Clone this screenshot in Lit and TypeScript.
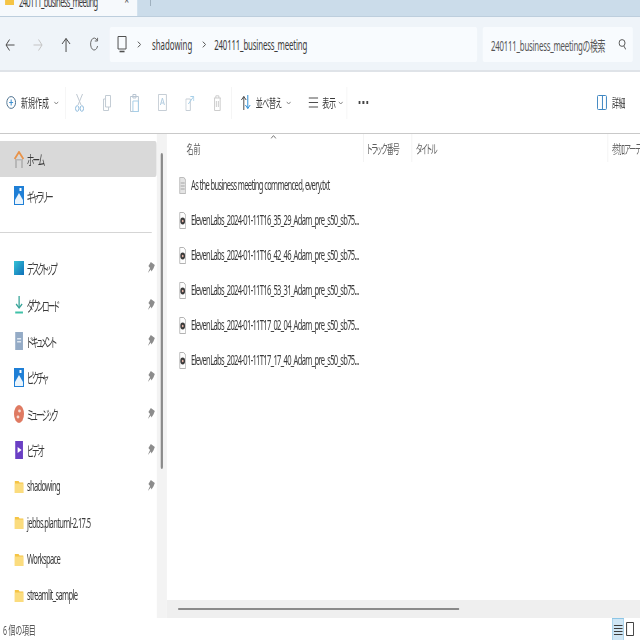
import { LitElement, html, css, svg } from "lit";
import { customElement } from "lit/decorators.js";

const ic = (w: number, h: number, body: unknown, cls = "") => html`<svg class="ic ${cls}" style="width:calc(${w} * var(--u));height:${h}px" viewBox="0 0 ${w} ${h}" preserveAspectRatio="none" fill="none">${body}</svg>`;

const s = (d: string, c = "#555", w = 1) => svg`<path d=${d} stroke=${c} stroke-width=${w} fill="none"/>`;
const f = (d: string, c: string) => svg`<path d=${d} fill=${c}/>`;

const chev = html`<span class="chev">${ic(5, 4, s("M.5 .8L2.5 3L4.5 .8", "#888"))}</span>`;
const folder = (h = 13) => ic(9, h, svg`${f("M0 1h4l1 1.5h4V13H0z", "#f5c445")}${f("M0 3.5h9V13H0z", "#fbdc7e")}`);
const pin = ic(7, 12, svg`${f("M3 0L7 3L5.6 6.5L3.6 9.5L3 7.5L0 11L2.2 6L.6 4z", "#8c8c8c")}`);

const homeI = ic(10, 17, svg`${f("M1 8h8v9H7V9.5H3V17H1z", "#b7b7b7")}${s("M.6 8L5 1L9.4 8", "#e8934a", 1.8)}`);
const galleryI = ic(10, 19, svg`${f("M0 0h10v19H0z", "#1f7fd6")}${f("M1 14L5 7L9 14V18H1z", "#eaf4fc")}${f("M5.5 2h2v3h-2z", "#fff")}`);
const desktopI = ic(10, 14, svg`<defs><linearGradient id="dg" x1="0" y1="0" x2="1" y2="1"><stop offset="0" stop-color="#35c3d6"/><stop offset="1" stop-color="#0f6fb8"/></linearGradient></defs><rect width="10" height="14" fill="url(#dg)"/>`);
const downloadI = ic(8, 18, svg`${s("M4 0V12", "#3aa59a", 1.3)}${s("M1 8L4 12L7 8", "#3aa59a", 1.3)}${s("M0 16.5H8", "#3fc1a8", 1.8)}`);
const docI = ic(8, 18, svg`${f("M0 0h8v18H0z", "#94abc6")}${f("M2 6h4v1.5H2zM2 9h4v1.5H2z", "#dfe8f1")}`);
const musicI = ic(10, 18, svg`<ellipse cx="5" cy="9" rx="5" ry="9" fill="#df7a62"/><circle cx="5.5" cy="6" r="1.4" fill="#f6dcd4"/><circle cx="4" cy="12" r="1.4" fill="#f6dcd4"/>`);
const videoI = ic(8, 18, svg`${f("M0 0h8v18H0z", "#6a3fc4")}${f("M2.5 6L6.5 9L2.5 12z", "#fff")}`);

const txtI = ic(7, 17, svg`${f("M0 0h5l2 2.5V17H0z", "#e4e4e4")}${s("M.5 .5h4l2 2.5v13.5h-6z", "#bcbcbc")}${s("M1.5 6H5.5M1.5 9H5.5M1.5 12H5.5", "#a5a5a5")}`);
const audioI = ic(7, 17, svg`${f("M.5 .5h4l2 2.5v13.5h-6z", "#fdfdfd")}${s("M.5 .5h4l2 2.5v13.5h-6z", "#b4b4b4")}<ellipse cx="3.5" cy="9" rx="2.4" ry="3.4" fill="#3b3b3b"/><ellipse cx="3.5" cy="9" rx=".9" ry="1.3" fill="#e6b6a8"/>`);

const nav = [
  ic(10, 16, s("M9.5 8H1M4.5 2.5L1 8L4.5 13.5", "#4c4c4c")),
  ic(10, 16, s("M.5 8H9M5.5 2.5L9 8L5.5 13.5", "#c4c4c4")),
  ic(10, 16, s("M5 15V1.5M1 7L5 1.5L9 7", "#4c4c4c")),
  ic(9, 15, s("M7.5 3.5A3.6 6 0 1 0 8 9M8 .8V4H5.2", "#6a6a6a")),
];
const monitor = ic(10, 18, svg`${s("M1 .5H9V13H1z", "#505050")}${s("M2.5 15.5H7.5", "#505050", 1.6)}`);
const crumb = ic(4, 7, s("M.6 .6L3.4 3.5L.6 6.4", "#555"));
const search = ic(8, 11, s("M6.8 4A3 3.4 0 1 1 .8 4A3 3.4 0 1 1 6.8 4M5.6 7L7.6 10.5", "#5a5a5a"));
const scissors = ic(9, 18, svg`${s("M1.5 0L6 11M7.5 0L3 11", "#c0c9d2")}<ellipse cx="2.2" cy="14.5" rx="1.7" ry="2.8" stroke="#8fbbdc"/><ellipse cx="6.8" cy="14.5" rx="1.7" ry="2.8" stroke="#8fbbdc"/>`);
const tools = [
  scissors,
  ic(8, 16, s("M2.5 .5H7.5V12H2.5zM2.5 4H.5V15.5H5.5V12", "#c3ccd4")),
  ic(9, 18, svg`${s("M.5 2.5H8.5V17.5H.5z", "#b9c6d2")}${s("M3 .5H6V4H3z", "#b9c6d2")}${s("M3 7H8.5V17.5H3z", "#a7cfe8")}`),
  ic(9, 17, svg`${s("M.5 .5H8.5V16.5H.5z", "#c6ced6")}${s("M2.5 11L4.5 4L6.5 11M3.2 9H5.8", "#b3cde0")}`),
  ic(9, 16, svg`${s("M.5 4H5V15.5H.5V4", "#c6ced6")}${s("M3 9L8 2M5 1.5H8.5V6", "#a7cfe8")}`),
  ic(8, 16, s("M.5 3H7.5M2.5 3V.8H5.5V3M1.2 3V15.5H6.8V3M3 6V12M5 6V12", "#cdcdcd")),
];

const side = [
  ["デスクトップ", desktopI, 1, 1],
  ["ダウンロード", downloadI, 1, 1],
  ["ドキュメント", docI, 1, 1],
  ["ピクチャ", galleryI, 1, 1],
  ["ミュージック", musicI, 1, 1],
  ["ビデオ", videoI, 1, 1],
  ["shadowing", folder(), 1, 0],
  ["jebbs.plantuml-2.17.5", folder(), 0, 0],
  ["Workspace", folder(), 0, 0],
  ["streamlit_sample", folder(), 0, 0],
] as const;

const files = ["16_35_29", "16_42_46", "16_53_31", "17_02_04", "17_17_40"];

@customElement("app-root")
export class AppRoot extends LitElement {
  static styles = css`
    :host { display: block; width: 640px; height: 640px; overflow: hidden; --u: 1.7857px; background: #fff; }
    .app { width: calc(640 * var(--u)); height: 640px; transform: scaleX(.56); transform-origin: 0 0; display: flex; flex-direction: column; font-family: "Noto Sans", "Noto Sans CJK JP", sans-serif; font-size: 14px; color: #3a3a3a; font-feature-settings: "palt"; white-space: nowrap; }
    .ic { flex: none; display: block; }

    .tabs { height: 17px; flex: none; background: #cbdcea; display: flex; border-bottom: 1px solid #bdcedd; box-sizing: border-box; overflow: hidden; }
    .tab { width: calc(137 * var(--u)); height: 17px; flex: none; background: #f6f9fc; display: flex; align-items: flex-start; padding-left: calc(5 * var(--u)); box-sizing: border-box; overflow: hidden; }
    .tab .tb { margin: -8px 0 0 calc(5 * var(--u)); flex: 1; height: 20px; line-height: 20px; font-size: 13.5px; letter-spacing: -1.15px; }
    .tab .x { color: #555; font-size: 14px; line-height: 20px; margin: -10px calc(8 * var(--u)) 0 0; }
    .tabplus { margin-left: calc(13 * var(--u)); width: 1px; height: 6px; background: #7d8d9b; }

    .addr { flex: none; background: #eff4f9; border-bottom: 2px solid #dfe3e8; display: flex; align-items: flex-start; padding-top: 10px; height: 43px; }
    .nav { display: flex; flex: none; margin-left: calc(-4 * var(--u)); width: calc(114 * var(--u)); }
    .nav div { width: calc(28 * var(--u)); height: 35px; display: flex; align-items: center; justify-content: center; }
    .box { height: 35px; flex: none; background: #f8fbfe; border-radius: 3px; display: flex; align-items: center; }
    .path { width: calc(367 * var(--u)); margin-right: calc(6 * var(--u)); padding-left: calc(7 * var(--u)); box-sizing: border-box; }
    .path .cr1 { margin: 0 calc(11 * var(--u)) 0 calc(10 * var(--u)); }
    .path .cr2 { margin: 0 calc(8 * var(--u)) 0 calc(10 * var(--u)); }
    .path .lng { letter-spacing: -.3px; }
    .srch { width: calc(150 * var(--u)); padding-left: calc(8 * var(--u)); box-sizing: border-box; justify-content: space-between; padding-right: calc(7 * var(--u)); color: #555; letter-spacing: -.4px; }

    .tool { height: 61px; flex: none; border-bottom: 1px solid #c9c9c9; display: flex; align-items: center; font-size: 12.5px; letter-spacing: -.8px; }
    .sep { width: 1px; height: 32px; background: #eee; flex: none; }
    .new { width: calc(65 * var(--u)); flex: none; display: flex; align-items: center; padding-left: calc(6 * var(--u)); box-sizing: border-box; }
    .new .lb { margin: 0 calc(5 * var(--u)); letter-spacing: 0; }
    .ti { width: calc(27.6 * var(--u)); flex: none; display: flex; justify-content: center; }
    .sort { width: calc(115 * var(--u)); flex: none; display: flex; align-items: center; padding-left: calc(9 * var(--u)); box-sizing: border-box; }
    .sort .a { margin: 0 calc(5 * var(--u)); }
    .sort .b { margin: 0 calc(3 * var(--u)) 0 calc(4 * var(--u)); }
    .sort .l { margin-left: calc(17 * var(--u)); }
    .more { margin-left: calc(11 * var(--u)); }
    .det { margin-left: auto; padding-right: calc(15 * var(--u)); display: flex; align-items: center; gap: calc(5 * var(--u)); }
    .chev { display: block; }

    .body { flex: 1; min-height: 0; display: flex; }
    .side { width: calc(157 * var(--u)); flex: none; padding-top: 7px; box-sizing: border-box; overflow: hidden; font-size: 13.5px; letter-spacing: -1.15px; }
    .row { height: 36.35px; display: flex; align-items: center; padding-left: calc(14 * var(--u)); padding-right: calc(2 * var(--u)); }
    .row .icw { width: calc(10 * var(--u)); display: flex; justify-content: center; margin-right: calc(3 * var(--u)); }
    .row .pn { margin-left: auto; }
    .row.on { background: #d9d9d9; border-radius: 0 4px 4px 0; }
    .kana { letter-spacing: -3.1px; }
    .div { height: 1px; width: calc(152 * var(--u)); background: #d5d5d5; margin: 18.5px 0 17px; }
    .track { width: calc(10 * var(--u)); flex: none; background: #f3f3f3; padding-top: 19px; box-sizing: border-box; display: flex; justify-content: center; }
    .thumb { width: calc(2.4 * var(--u)); height: 316px; background: #8a8a8a; border-radius: 2px; }

    .main { flex: 1; min-width: 0; display: flex; flex-direction: column; overflow: hidden; }
    .head { height: 33.5px; flex: none; display: flex; align-items: flex-start; font-size: 12.5px; color: #606060; letter-spacing: -1.6px; }
    .col { height: 28px; flex: none; display: flex; align-items: center; border-right: 1px solid #ececec; box-sizing: border-box; }
    .c1 { width: calc(197 * var(--u)); padding-left: calc(19.5 * var(--u)); letter-spacing: 0; }
    .c2 { width: calc(48 * var(--u)); padding-left: calc(3 * var(--u)); }
    .c3 { width: calc(196 * var(--u)); padding-left: calc(4 * var(--u)); }
    .c4 { padding-left: calc(4 * var(--u)); border: 0; }
    .caret { margin-left: calc(70 * var(--u)); align-self: flex-start; margin-top: 1px; }
    .list { flex: 1; font-size: 13.5px; letter-spacing: -1.15px; }
    .file { height: 35px; display: flex; align-items: center; padding-left: calc(12 * var(--u)); gap: calc(5 * var(--u)); }
    .hbar { height: 18px; flex: none; background: #efefef; padding-left: calc(11 * var(--u)); display: flex; align-items: center; }
    .hthumb { width: calc(281 * var(--u)); height: 2.4px; background: #8a8a8a; border-radius: 2px; }

    .status { height: 22px; flex: none; display: flex; align-items: center; padding-left: calc(3 * var(--u)); font-size: 12.5px; color: #555; letter-spacing: -.3px; }
    .views { margin-left: auto; display: flex; align-self: flex-end; padding-right: calc(4 * var(--u)); }
    .vbtn { width: calc(12 * var(--u)); height: 22px; display: flex; align-items: center; justify-content: center; box-sizing: border-box; }
    .vbtn.on { background: #cfe6f5; border: 1px solid #8cc6e6; border-bottom: 0; }
  `;

  render() {
    return html`<div class="app">
      <div class="tabs">
        <div class="tab">
          ${ic(9, 5, svg`${f("M0 0h9v5H0z", "#f5c445")}`)}
          <span class="tb">240111_business_meeting</span>
          <span class="x">×</span>
        </div>
        <div class="tabplus"></div>
      </div>

      <div class="addr">
        <div class="nav">${nav.map((n) => html`<div>${n}</div>`)}</div>
        <div class="box path">
          ${monitor}
          <span class="cr1">${crumb}</span><span>shadowing</span>
          <span class="cr2">${crumb}</span><span class="lng">240111_business_meeting</span>
        </div>
        <div class="box srch">
          <span>240111_business_meetingの検索</span>${search}
        </div>
      </div>

      <div class="tool">
        <div class="new">
          ${ic(10, 13, svg`<ellipse cx="5" cy="6.5" rx="4.4" ry="5.9" stroke="#4a6f8f"/>${s("M5 3.5V9.5M3 6.5H7", "#3b8fd0")}`)}
          <span class="lb">新規作成</span>${chev}
        </div>
        <div class="sep"></div>
        ${tools.map((t) => html`<div class="ti">${t}</div>`)}
        <div class="sep"></div>
        <div class="sort">
          ${ic(10, 15, svg`${s("M3 15V1.5M.6 5L3 1.5L5.4 5", "#4c4c4c")}${s("M7 0V13.5M4.6 10L7 13.5L9.4 10", "#2f8fd6")}`)}
          <span class="a">並べ替え</span>${chev}
          <span class="l">${ic(10, 11, s("M0 1H10M0 5.5H10M0 10H10", "#4c4c4c"))}</span>
          <span class="b">表示</span>${chev}
        </div>
        <div class="sep"></div>
        <div class="more">${ic(10, 3, svg`${f("M0 0h2v3H0zM4 0h2v3H4zM8 0h2v3H8z", "#444")}`)}</div>
        <div class="det">
          ${ic(10, 15, svg`${s("M.5 1.5Q.5 .5 1.5 .5H8.5Q9.5 .5 9.5 1.5V13.5Q9.5 14.5 8.5 14.5H1.5Q.5 14.5 .5 13.5Z", "#3f87c2")}${s("M5.5 .5V14.5", "#3f87c2")}`)}
          <span>詳細</span>
        </div>
      </div>

      <div class="body">
        <div class="side">
          <div class="row on"><span class="icw">${homeI}</span><span class="kana">ホーム</span></div>
          <div class="row"><span class="icw">${galleryI}</span><span class="kana">ギャラリー</span></div>
          <div class="div"></div>
          ${side.map(([name, icon, p, k]) => html`<div class="row"><span class="icw">${icon}</span><span class=${k ? "kana" : ""}>${name}</span>${p ? html`<span class="pn">${pin}</span>` : ""}</div>`)}
        </div>
        <div class="track"><div class="thumb"></div></div>
        <div class="main">
          <div class="head">
            <div class="col c1"><span>名前</span><span class="caret">${ic(6, 4, s("M.5 3.5L3 .6L5.5 3.5", "#777"))}</span></div>
            <div class="col c2">トラック番号</div>
            <div class="col c3">タイトル</div>
            <div class="col c4">参加アーティスト</div>
          </div>
          <div class="list">
            <div class="file">${txtI}<span>As the business meeting commenced, every.txt</span></div>
            ${files.map((t) => html`<div class="file">${audioI}<span>ElevenLabs_2024-01-11T${t}_Adam_pre_s50_sb75...</span></div>`)}
          </div>
          <div class="hbar"><div class="hthumb"></div></div>
        </div>
      </div>

      <div class="status">
        <span>6 個の項目</span>
        <div class="views">
          <div class="vbtn on">${ic(9, 12, s("M0 1.5H9M0 4.5H9M0 7.5H9M0 10.5H9", "#3d3d3d", 1.2))}</div>
          <div class="vbtn">${ic(8, 14, s("M.5 .5H7.5V13.5H.5z", "#3d3d3d"))}</div>
        </div>
      </div>
    </div>`;
  }
}
